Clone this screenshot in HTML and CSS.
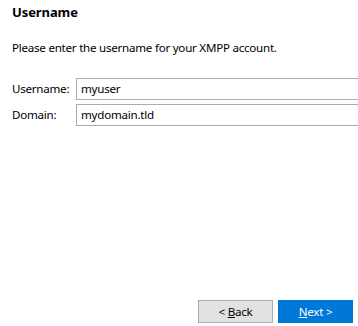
FILE: index.html
```html
<!DOCTYPE html>
<html>
<head>
<meta charset="utf-8">
<link rel="stylesheet" href="styles.css">
</head>
<body>
<div class="page">
  <div class="content">
    <h1 class="title">Username</h1>
    <p class="intro">Please enter the username for your XMPP account.</p>
    <div class="form">
      <label class="label">Username:</label>
      <div class="field">myuser</div>
      <label class="label">Domain:</label>
      <div class="field">mydomain.tld</div>
    </div>
  </div>
  <div class="buttons">
    <button class="btn back">&lt; <u>B</u>ack</button>
    <button class="btn next"><u>N</u>ext &gt;</button>
  </div>
</div>
</body>
</html>
```
FILE: styles.css
```css
html, body {
  margin: 0;
  padding: 0;
  background: #ffffff;
}
body {
  font-family: "Noto Sans", "Open Sans", sans-serif;
  font-size: 11.6px;
  letter-spacing: -0.25px;
  color: #000;
}
.page {
  width: 358px;
  height: 326px;
  display: flex;
  flex-direction: column;
  overflow: hidden;
}
.content {
  flex: 1;
  padding: 3px 0 0 12px;
}
.title {
  margin: 0;
  font-size: 13px;
  font-weight: bold;
  letter-spacing: -0.1px;
  line-height: 18px;
}
.intro {
  margin: 19px 0 0;
  line-height: 16px;
}
.form {
  margin-top: 22px;
  display: grid;
  grid-template-columns: 64px 1fr;
  row-gap: 4px;
  align-items: center;
  margin-right: -10px;
}
.label {
  line-height: 16px;
  white-space: nowrap;
}
.field {
  height: 20px;
  border: 1px solid #acacac;
  padding: 0 4px;
  line-height: 20px;
}
.buttons {
  display: flex;
  justify-content: flex-end;
  gap: 5px;
  padding: 0 5px 3px 0;
}
.btn {
  width: 75px;
  height: 23px;
  font-family: inherit;
  font-size: 11.6px;
  letter-spacing: -0.25px;
  padding: 0;
  border: 1px solid #adadad;
  background: #e1e1e1;
  color: #000;
}
.btn.next {
  background: #0078d7;
  border-color: #0078d7;
  color: #fff;
}
```
